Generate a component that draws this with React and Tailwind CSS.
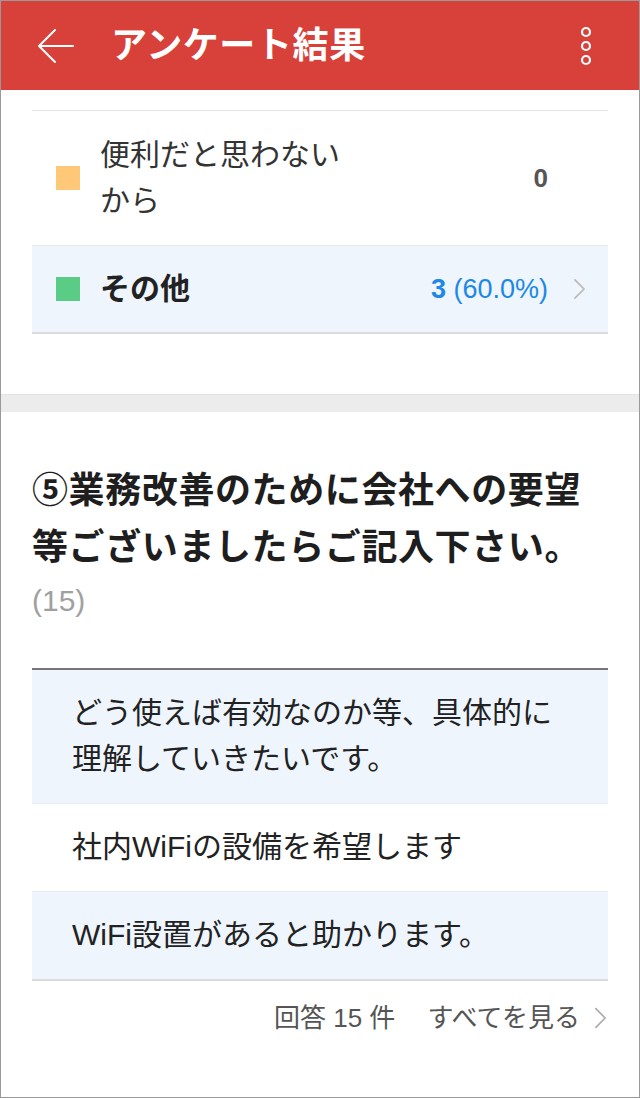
import React from 'react';

const FONT = { fontFamily: '"Liberation Sans", "Noto Sans CJK JP", sans-serif' };

const CHOICES = [
  { label: ['便利だと思わない', 'から'], color: 'bg-[#ffc878]', count: '0', active: false },
  { label: ['その他'], color: 'bg-[#5bcc86]', count: '3', pct: '(60.0%)', active: true },
];

const ANSWERS = [
  { lines: ['どう使えば有効なのか等、具体的に', '理解していきたいです。'], shaded: true },
  { lines: ['社内WiFiの設備を希望します'], shaded: false },
  { lines: ['WiFi設置があると助かります。'], shaded: true },
];

function Chevron({ className }) {
  return (
    <svg viewBox="0 0 14 24" className={className} fill="none" stroke="currentColor" strokeWidth="1.8" strokeLinecap="round" strokeLinejoin="round">
      <path d="M2 2l10 10L2 22" />
    </svg>
  );
}

function Header() {
  return (
    <div className="h-[89px] bg-[#d8403a] flex items-center text-white shrink-0">
      <svg viewBox="0 0 36 34" className="w-[36px] h-[34px] ml-[37px]" fill="none" stroke="white" strokeWidth="2" strokeLinecap="round" strokeLinejoin="round">
        <path d="M1 17h34M17 1L1 17l16 16" />
      </svg>
      <h1 className="ml-[37px] text-[36px] font-bold leading-none tracking-[0.6px]">アンケート結果</h1>
      <svg viewBox="0 0 12 40" className="ml-auto mr-[47px] w-[12px] h-[40px]" fill="none" stroke="white" strokeWidth="2.2">
        <circle cx="6" cy="6" r="4" />
        <circle cx="6" cy="20" r="4" />
        <circle cx="6" cy="34" r="4" />
      </svg>
    </div>
  );
}

function ChoiceRow({ c }) {
  return (
    <div className={`flex items-center pl-[24px] pr-[22px] ${c.active ? 'bg-[#eef5fd] h-[88px] border-b-2 border-[#dcdcdc]' : 'pt-[21px] pb-[21px] border-b border-[#e8e8e8]'}`}>
      <div className={`w-[24px] h-[24px] shrink-0 ${c.color}`} />
      <div className={`ml-[20px] w-[260px] text-[30px] leading-[46px] ${c.active ? 'font-bold text-[#222]' : 'text-[#333]'}`}>
        {c.label.map((l, i) => <div key={i}>{l}</div>)}
      </div>
      <div className="ml-auto text-[27px] leading-[46px]">
        {c.active ? (
          <span className="text-[#1d88e6]"><b>3</b> {c.pct}</span>
        ) : (
          <b className="text-[#555] text-[26px]">{c.count}</b>
        )}
      </div>
      <div className="w-[38px] flex justify-end">
        {c.active && <Chevron className="w-[13px] h-[22px] text-[#b8b8b8]" />}
      </div>
    </div>
  );
}

export default function App() {
  return (
    <div className="w-[640px] h-[1098px] border border-[#9a9a9a] bg-white overflow-hidden flex flex-col" style={FONT}>
      <Header />

      <div className="px-[31px] pt-[20px] pb-[60px]">
        <div className="h-px bg-[#e6e6e6]" />
        {CHOICES.map((c, i) => <ChoiceRow key={i} c={c} />)}
      </div>

      <div className="h-[18px] bg-[#ececec] border-t border-[#e2e2e2]" />

      <div className="px-[31px] pt-[50px]">
        <h2 className="text-[36px] font-bold leading-[57px] text-[#1e1e1e] tracking-[0.6px]">
          ⑤業務改善のために会社への要望<br />等ございましたらご記入下さい。
        </h2>
        <p className="text-[30px] leading-[44px] text-[#a0a0a0] mt-[3px]">(15)</p>

        <div className="mt-[45px] border-t-2 border-[#767676]">
          {ANSWERS.map((a, i) => (
            <div key={i} className={`pl-[40px] pr-[40px] pt-[20px] pb-[21px] text-[30px] leading-[46px] text-[#222] ${a.shaded ? 'bg-[#eef5fd]' : 'bg-white'} ${i === ANSWERS.length - 1 ? 'border-b-2 border-[#dcdcdc]' : 'border-b border-[#e6ecef]'}`}>
              {a.lines.map((l, j) => <div key={j}>{l}</div>)}
            </div>
          ))}
        </div>

        <div className="flex items-center justify-end pt-[19px] text-[26px] leading-[36px] text-[#555]">
          <span>回答 15 件</span>
          <span className="ml-[32px]">すべてを見る</span>
          <Chevron className="ml-[14px] mr-[1px] w-[13px] h-[24px] text-[#aaa]" />
        </div>
      </div>
    </div>
  );
}
